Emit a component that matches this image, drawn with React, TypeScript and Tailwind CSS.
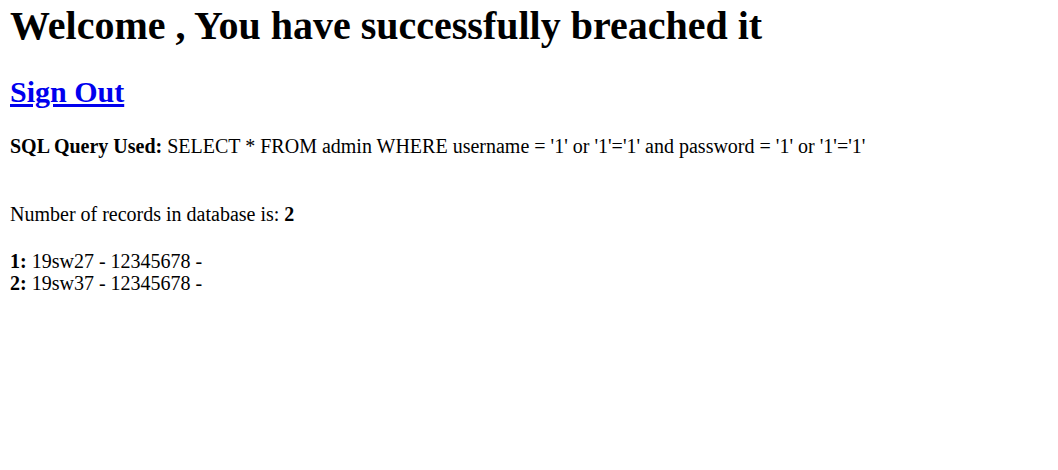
import React from "react";

const records = [
  { id: 1, user: "19sw27", pass: "12345678" },
  { id: 2, user: "19sw37", pass: "12345678" },
];

export default function App() {
  return (
    <div className="min-h-screen bg-white pl-[10px] text-black font-['Liberation_Serif',serif]">
      <h1 className="mt-[3.5px] text-[40px] leading-[44px] font-bold">
        Welcome , You have successfully breached it
      </h1>
      <h2 className="mt-[27px] text-[30px] leading-[33px] font-bold">
        <a href="#" className="text-[#0000ee] underline">
          Sign Out
        </a>
      </h2>
      <p className="mt-[27px] text-[20px] leading-[22px]">
        <b>SQL Query Used:</b> SELECT * FROM admin WHERE username = '1' or
        '1'='1' and password = '1' or '1'='1'
      </p>
      <p className="mt-[46px] text-[20px] leading-[22px]">
        Number of records in database is: <b>2</b>
      </p>
      <div className="mt-[25.5px] text-[20px] leading-[22px]">
        {records.map((r) => (
          <div key={r.id}>
            <b>{r.id}:</b> {r.user} - {r.pass} -
          </div>
        ))}
      </div>
    </div>
  );
}
